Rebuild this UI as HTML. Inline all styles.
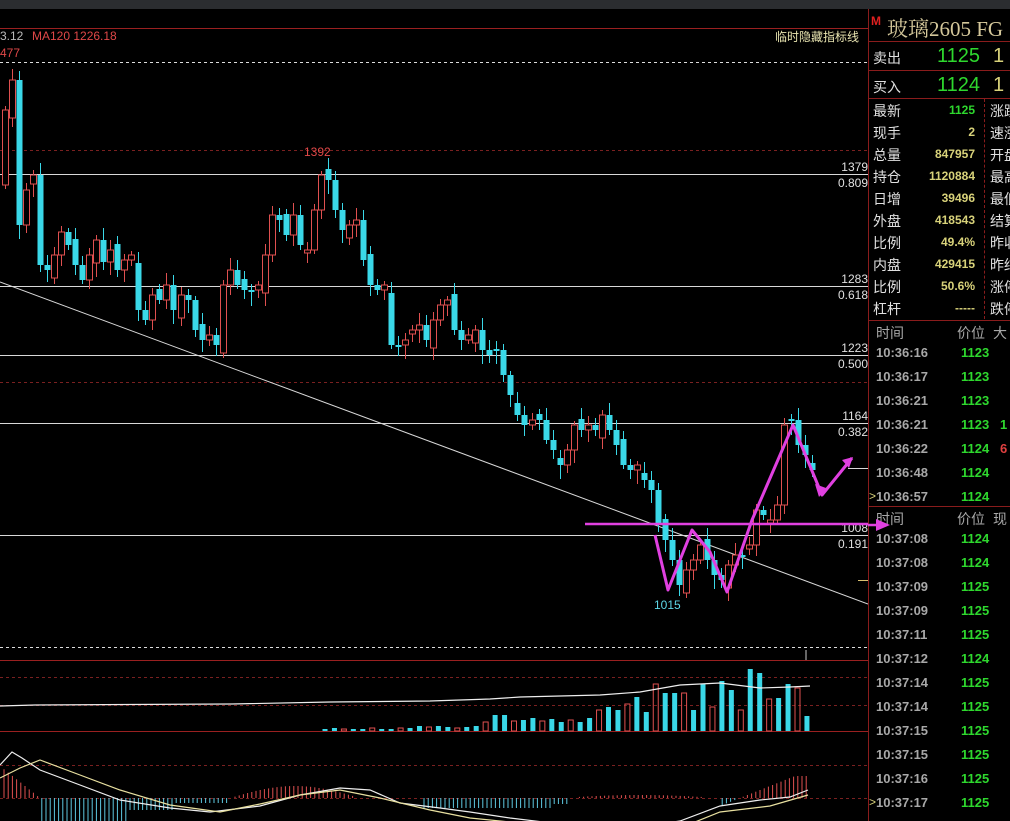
<!DOCTYPE html>
<html><head><meta charset="utf-8"><style>
*{margin:0;padding:0}
body{width:1010px;height:821px;background:#000;overflow:hidden;position:relative;font-family:"Liberation Sans","Noto Sans CJK SC",sans-serif}
#top{position:absolute;left:0;top:0;width:1010px;height:9px;background:#2b2d30}
#c{position:absolute;left:0;top:0}
.p{position:absolute;left:868px;top:9px;width:142px;height:812px;border-left:1px solid #8a1c1c;overflow:hidden}
.t{position:absolute;white-space:nowrap}
.l{color:#e0e0e0;font-size:14px;left:4px}
.v{font-size:12px;font-weight:bold;right:36px;text-align:right;color:#d8d27a}
.g{color:#2ed82e}
.tm{color:#a8a8a8;font-size:13px;font-weight:bold;left:7px}
.pr{color:#2ed82e;font-size:13px;font-weight:bold;left:92px}
.hl{position:absolute;left:0;width:142px;height:1px;background:#8a1c1c}
</style></head><body>
<div id="top"></div>
<svg id="c" width="868" height="821" viewBox="0 0 868 821">
<line x1="0" y1="28.5" x2="868" y2="28.5" stroke="#9a2020"/>
<line x1="0" y1="62.5" x2="868" y2="62.5" stroke="#ddd" stroke-dasharray="3,3"/>
<line x1="0" y1="150.5" x2="868" y2="150.5" stroke="#7a2020" stroke-dasharray="3,3"/>
<line x1="0" y1="382.5" x2="868" y2="382.5" stroke="#7a2020" stroke-dasharray="3,3"/>
<g stroke="#d8d8d8" stroke-width="1">
<line x1="0" y1="174.5" x2="868" y2="174.5"/><line x1="0" y1="286.5" x2="868" y2="286.5"/>
<line x1="0" y1="355.5" x2="868" y2="355.5"/><line x1="0" y1="423.5" x2="868" y2="423.5"/>
<line x1="0" y1="535.5" x2="868" y2="535.5"/>
<line x1="0" y1="282" x2="868" y2="604"/>
<line x1="848" y1="468.5" x2="868" y2="468.5"/><line x1="858" y1="580.5" x2="868" y2="580.5" stroke="#d8c070"/>
</g>
<line x1="0" y1="647.5" x2="868" y2="647.5" stroke="#ddd" stroke-dasharray="3,3"/>
<line x1="0" y1="660.5" x2="868" y2="660.5" stroke="#9a2020"/>
<line x1="0" y1="677.5" x2="868" y2="677.5" stroke="#7a2020" stroke-dasharray="3,3"/>
<line x1="0" y1="705.5" x2="868" y2="705.5" stroke="#7a2020" stroke-dasharray="3,3"/>
<line x1="0" y1="731.5" x2="868" y2="731.5" stroke="#9a2020"/>
<line x1="0" y1="765.5" x2="868" y2="765.5" stroke="#7a2020" stroke-dasharray="3,3"/>
<line x1="0" y1="798.5" x2="868" y2="798.5" stroke="#7a2020" stroke-dasharray="3,3"/>
<line x1="806" y1="650" x2="806" y2="660" stroke="#ccc"/>
<g id="cd"></g><g id="vb"></g><g id="md"></g>
<polyline points="0,706 35,705 232,704 330,702 430,701 490,699 520,697 600,695 640,692 680,685 720,683 760,688 790,687 810,686" fill="none" stroke="#eee" stroke-width="1.2"/>
<polyline points="0,765 12,752 22,758 40,770 80,785 120,800 170,808 210,812 260,806 300,795 340,788 370,790 400,803 440,808 470,812 510,818 560,824 620,830 680,821 720,806 760,800 790,797 808,790" fill="none" stroke="#eee" stroke-width="1.2"/>
<polyline points="0,778 20,768 40,760 80,775 120,790 170,805 220,812 260,804 300,795 340,790 380,798 430,810 470,818 520,823 570,825 620,828 680,828 720,812 770,806 808,795" fill="none" stroke="#e8e0a0" stroke-width="1.2"/>
<rect x="0" y="30" width="140" height="30" fill="#000"/>
<g fill="#e04848" font-size="12">
<text x="0" y="57">477</text><text x="32" y="40">MA120 1226.18</text><text x="304" y="156">1392</text>
</g>
<text x="0" y="40" fill="#bbb" font-size="12">3.12</text>
<text x="775" y="41" fill="#e8e4b0" font-size="12">临时隐藏指标线</text>
<g fill="#e0e0e0" font-size="12" text-anchor="end">
<text x="868" y="171">1379</text><text x="868" y="187">0.809</text>
<text x="868" y="283">1283</text><text x="868" y="299">0.618</text>
<text x="868" y="352">1223</text><text x="868" y="368">0.500</text>
<text x="868" y="420">1164</text><text x="868" y="436">0.382</text>
<text x="868" y="532">1008</text><text x="868" y="548">0.191</text>
</g>
<text x="654" y="609" fill="#5ed8e8" font-size="12">1015</text>
<g stroke="#e040e0" stroke-width="3" fill="none" stroke-linejoin="round">
<line x1="585" y1="524" x2="880" y2="524" stroke-width="2.5"/>
<polyline points="655,535 668,590 692,530 710,552 727,592 752,520 793,425 822,495 852,458"/>
</g>
<g fill="#e040e0"><polygon points="853,457 842,460 849,468"/><polygon points="819,497 815,484 826,488"/></g>
</svg>
<div class="p">
<div class="t" style="left:2px;top:5px;color:#e02020;font-size:12px;font-weight:bold">M</div>
<div class="t" style="left:18px;top:4px;color:#d4c79a;font-size:21px;font-family:'Liberation Serif','Noto Serif CJK SC',serif">玻璃2605 FG</div>
<div class="hl" style="top:32px"></div>
<div class="t l" style="top:39px">卖出</div><div class="t g" style="left:68px;top:36px;font-size:20px">1125</div><div class="t" style="left:124px;top:36px;font-size:20px;color:#d8d27a">1</div>
<div class="hl" style="top:61px"></div>
<div class="t l" style="top:68px">买入</div><div class="t g" style="left:68px;top:65px;font-size:20px">1124</div><div class="t" style="left:124px;top:65px;font-size:20px;color:#d8d27a">1</div>
<div class="hl" style="top:89px"></div>
<div style="position:absolute;left:115px;top:90px;height:220px;border-left:1px dashed #8a1c1c"></div>
<div id="st"></div>
<div class="hl" style="top:311px"></div>
<div id="t1"></div>
<div class="hl" style="top:497px"></div>
<div id="t2"></div>
</div>
<div style="position:absolute;left:868px;top:518px;width:22px;height:12px"><svg width="22" height="12"><polygon points="22,6 8,0 8,12" fill="#e040e0"/><line x1="0" y1="6" x2="10" y2="6" stroke="#e040e0" stroke-width="2.5"/></svg></div>
<script>
var NS='http://www.w3.org/2000/svg';
function el(par,tag,a){var e=document.createElementNS(NS,tag);for(var k in a)e.setAttribute(k,a[k]);par.appendChild(e);}
var cl=[110,80,225,190,175,265,270,255,232,245,265,280,255,240,262,250,270,260,255,310,320,295,300,285,310,295,300,330,340,335,345,285,270,285,290,290,285,255,215,220,235,215,245,250,210,175,180,210,230,225,220,260,285,290,285,345,345,340,330,325,340,320,305,300,330,340,335,330,350,355,350,375,395,415,425,420,420,440,450,465,450,425,430,425,430,415,430,445,465,470,465,480,490,525,540,560,585,570,560,545,560,575,580,565,555,555,545,510,515,520,505,425,420,445,455,470];
var cd=document.getElementById('cd'),prev=185;
for(var i=0;i<cl.length;i++){var x=Math.round(5+i*7.02),o=prev,c=cl[i];
if(i%3==1)o=prev+(i%2?8:-6);
var tp=Math.min(o,c),bt=Math.max(o,c);if(bt-tp<2)bt=tp+2;
var hi=tp-4-(i*7%9),lo=bt+4+(i*5%11);
var up=c<o;var col=up?'#e05050':'#3ad8e8';
el(cd,'line',{x1:x+0.5,y1:hi,x2:x+0.5,y2:lo,stroke:col});
if(up)el(cd,'rect',{x:x-2.5,y:tp,width:6,height:bt-tp,fill:'#000',stroke:col});
else el(cd,'rect',{x:x-2.5,y:tp,width:6,height:bt-tp,fill:col});
prev=c;}
var vbg=document.getElementById('vb');
var vh=[0,0,0,0,0,0,0,0,0,0,2,3,2,2,2,3,2,2,3,3,5,4,5,4,3,4,5,9,16,16,10,11,13,10,12,9,11,9,13,21,24,21,27,34,19,47,38,38,38,21,47,24,50,41,21,62,58,32,33,47,43,15];
for(var j=0;j<vh.length;j++){var h=vh[j];if(!h)continue;var x=228+j*9.45;var up=(j*7%3==0);
if(up)el(vbg,'rect',{x:x,y:731-h,width:5,height:h,fill:'none',stroke:'#e05050'});
else el(vbg,'rect',{x:x,y:731-h,width:5,height:h,fill:'#3ad8e8'});}
var mdg=document.getElementById('md');
for(var x=4;x<810;x+=4.2){var v;
if(x<40)v=-(40-x)*0.8;else if(x<175)v=(x<130?25:12);else if(x<230)v=5;else if(x<360)v=-Math.sin((x-230)/130*Math.PI)*12;else if(x<420)v=0;else if(x<570)v=(x<550?10:6);else if(x<720)v=-Math.sin((x-560)/160*Math.PI)*3;else v=-Math.min(22,(x-740)*0.4);
if(Math.abs(v)<1)continue;el(mdg,'line',{x1:x.toFixed(1),y1:798,x2:x.toFixed(1),y2:(798+v).toFixed(1),stroke:(v<0?'#e05050':'#5ec8e0')});}
var st=[['最新','1125',1],['现手','2'],['总量','847957'],['持仓','1120884'],['日增','39496'],['外盘','418543'],['比例','49.4%'],['内盘','429415'],['比例','50.6%'],['杠杆','-----']];
var r2=['涨跌','速涨','开盘','最高','最低','结算','昨收','昨结','涨停','跌停'];var h='';
for(var k=0;k<st.length;k++){var y=92+k*22;h+='<div class="t l" style="top:'+y+'px">'+st[k][0]+'</div><div class="t v" style="top:'+(y+2)+'px;'+(st[k][2]?'color:#2ed82e':'')+'">'+st[k][1]+'</div><div class="t l" style="left:121px;top:'+y+'px">'+r2[k]+'</div>';}
document.getElementById('st').innerHTML=h;
function tbl(id,y0,hdr,rows){var h='<div class="t" style="left:7px;top:'+y0+'px;color:#a8a8a8;font-size:14px">时间</div><div class="t" style="left:88px;top:'+y0+'px;color:#a8a8a8;font-size:14px">价位</div><div class="t" style="left:124px;top:'+y0+'px;color:#a8a8a8;font-size:14px">'+hdr+'</div>';
for(var i=0;i<rows.length;i++){var y=y0+22+i*24;h+='<div class="t tm" style="top:'+y+'px">'+rows[i][0]+'</div><div class="t pr" style="top:'+y+'px">'+rows[i][1]+'</div>'+(rows[i][2]?'<div class="t" style="left:131px;top:'+y+'px;font-size:13px;font-weight:bold;color:'+rows[i][3]+'">'+rows[i][2]+'</div>':'')+(rows[i][4]?'<div class="t" style="left:0;top:'+y+'px;color:#d8d27a;font-size:12px">&gt;</div>':'');}
document.getElementById(id).innerHTML=h;}
tbl('t1',314,'大',[['10:36:16','1123'],['10:36:17','1123'],['10:36:21','1123'],['10:36:21','1123','1','#2ed82e'],['10:36:22','1124','6','#e04040'],['10:36:48','1124'],['10:36:57','1124',0,0,1]]);
tbl('t2',500,'现',[['10:37:08','1124'],['10:37:08','1124'],['10:37:09','1125'],['10:37:09','1125'],['10:37:11','1125'],['10:37:12','1124'],['10:37:14','1125'],['10:37:14','1125'],['10:37:15','1125'],['10:37:15','1125'],['10:37:16','1125'],['10:37:17','1125',0,0,1]]);
</script>
</body></html>
